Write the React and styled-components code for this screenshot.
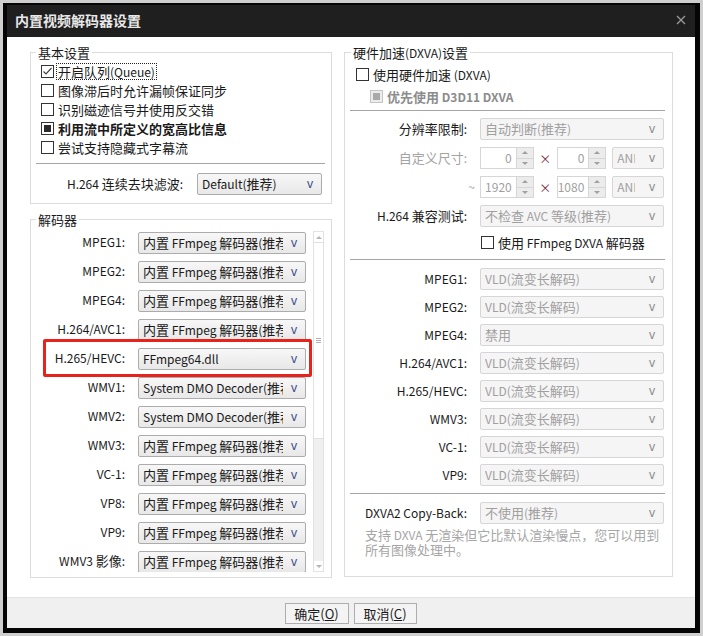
import React from "react";
import styled, { createGlobalStyle } from "styled-components";

const GlobalStyle = createGlobalStyle`
  html, body {
    margin: 0;
    padding: 0;
  }
  body {
    background: #cfcfcf;
    font-family: "Noto Sans CJK SC", "Noto Sans", sans-serif;
    font-size: 13px;
    color: #1a1a1a;
  }
`;

const Page = styled.div`
  width: 703px;
  height: 636px;
  padding: 3px;
  box-sizing: border-box;
`;

const Window = styled.div`
  width: 697px;
  height: 630px;
  box-sizing: border-box;
  border: solid #050505;
  border-width: 2px 5px 5px 4px;
  display: flex;
  flex-direction: column;
  background: #fff;
`;

const TitleBar = styled.div`
  height: 32px;
  flex-shrink: 0;
  background: #1f1f1f;
  display: flex;
  align-items: center;
  justify-content: space-between;
  padding: 0 9px 2px 8px;
  box-sizing: border-box;
`;

const Title = styled.span`
  color: #e8e8e8;
  font-weight: bold;
  font-size: 14px;
  line-height: 18px;
`;

const Content = styled.div`
  flex: 1;
  display: flex;
  align-items: flex-start;
  gap: 12px;
  padding: 7px 22px 0 23px;
`;

const Column = styled.div`
  width: ${(p) => p.$w}px;
  display: flex;
  flex-direction: column;
  gap: 7px;
`;

const Group = styled.fieldset`
  margin: 0;
  padding: 0 0 ${(p) => p.$pb || 0}px 0;
  border: 1px solid #dcdcdc;
  min-width: 0;
`;

const Legend = styled.legend`
  margin-left: ${(p) => p.$ml}px;
  padding: 0 2px;
  font-size: 13px;
  line-height: 17px;
  color: #1a1a1a;
`;

/* Latin runs are set a little smaller, as the dialog's UI font does */
const Latin = styled.span`
  font-size: 12px;
`;

const t = (text) =>
  text
    .split(/([\x20-\x7e]+)/)
    .map((part, i) => (i % 2 ? <Latin key={i}>{part}</Latin> : part));

const CheckList = styled.div`
  display: flex;
  flex-direction: column;
  gap: ${(p) => p.$gap || 0}px;
  padding: ${(p) => p.$pt || 0}px 0 0 0;
`;

const CheckRow = styled.div`
  height: 19px;
  display: flex;
  align-items: center;
  gap: 4px;
  padding-left: ${(p) => p.$indent}px;
  margin-top: ${(p) => p.$mt || 0}px;
`;

const Box = styled.span`
  width: 13px;
  height: 13px;
  box-sizing: border-box;
  border: 1px solid ${(p) => (p.$disabled ? "#c4c4c4" : "#333")};
  background: ${(p) => (p.$disabled ? "#ececec" : "#fff")};
  display: inline-flex;
  align-items: center;
  justify-content: center;
  flex-shrink: 0;
`;

const Mark = styled.span`
  width: 7px;
  height: 7px;
  background: ${(p) => (p.$disabled ? "#a9a9a9" : "#2a2a2a")};
`;

const CheckText = styled.span`
  line-height: 15px;
  white-space: nowrap;
  font-weight: ${(p) => (p.$bold ? "bold" : "normal")};
  color: ${(p) => (p.$disabled ? "#8c8c8c" : "#1a1a1a")};
  outline: ${(p) => (p.$focus ? "1px dotted #222" : "none")};
  padding: 0 1px;
  margin-left: -1px;
`;

const Separator = styled.div`
  height: 1px;
  background: #a5a5a5;
  margin: ${(p) => p.$mt}px ${(p) => p.$mr}px 0 ${(p) => p.$ml}px;
`;

const InlineRow = styled.div`
  display: flex;
  justify-content: flex-end;
  align-items: center;
  gap: 2px;
  margin-top: 9px;
  padding: 0 9px 8px 0;
`;

const Label = styled.span`
  line-height: 22px;
  text-align: right;
  white-space: nowrap;
  color: ${(p) => (p.$disabled ? "#a3a3a3" : "#1a1a1a")};
  padding-right: ${(p) => (p.$pr == null ? 11 : p.$pr)}px;
`;

const SelectBox = styled.div`
  width: ${(p) => p.$w}px;
  height: 22px;
  box-sizing: border-box;
  margin-top: ${(p) => p.$mt || 0}px;
  border: 1px solid ${(p) => (p.$disabled ? "#d6d6d6" : "#acacac")};
  border-radius: 2px;
  background: ${(p) =>
    p.$disabled ? "#f5f5f5" : "linear-gradient(#f7f7f7, #e8e8e8)"};
  display: flex;
  align-items: center;
  padding-left: 4px;
  color: ${(p) => (p.$disabled ? "#a0a0a0" : "#1a1a1a")};
`;

const SelectText = styled.span`
  flex: ${(p) => (p.$clip ? "none" : "1")};
  width: ${(p) => (p.$clip ? `${p.$clip}px` : "auto")};
  overflow: hidden;
  white-space: nowrap;
  line-height: 20px;
`;

const Arrow = styled.span`
  width: 22px;
  margin-left: auto;
  flex-shrink: 0;
  text-align: center;
  font-family: "Noto Sans", sans-serif;
  font-size: 12px;
  line-height: 20px;
  color: ${(p) => (p.$disabled ? "#8a8a8a" : "#3b4a8a")};
`;

const DecoderBody = styled.div`
  position: relative;
  display: flex;
  gap: 7px;
  padding: 3px 7px 5px 0;
`;

const Viewport = styled.div`
  width: 275px;
  height: 341px;
  overflow: hidden;
`;

const DecoderGrid = styled.div`
  display: grid;
  grid-template-columns: 105px 168px;
  grid-auto-rows: 29px;
  column-gap: 2px;
  align-items: start;
`;

const Highlight = styled.div`
  position: absolute;
  left: 12px;
  top: 111px;
  width: 269px;
  height: 38px;
  box-sizing: border-box;
  border: 3px solid #e8231c;
  border-radius: 2px;
  pointer-events: none;
`;

const Scrollbar = styled.div`
  width: 11px;
  height: 341px;
  box-sizing: border-box;
  border: 1px solid #e2e2e2;
  background: #f0f0f0;
  display: flex;
  flex-direction: column;
`;

const ScrollArrow = styled.div`
  height: 10px;
  flex-shrink: 0;
  background: #fff;
  display: flex;
  align-items: center;
  justify-content: center;
  margin-top: ${(p) => (p.$down ? "auto" : "0")};
  &::after {
    content: "";
    border-left: 3px solid transparent;
    border-right: 3px solid transparent;
    ${(p) =>
      p.$down
        ? "border-top: 3px solid #b5b5b5;"
        : "border-bottom: 3px solid #b5b5b5;"}
  }
`;

const Thumb = styled.div`
  height: 195px;
  flex-shrink: 0;
  background: #fff;
  border-top: 1px solid #e0e0e0;
  border-bottom: 1px solid #e0e0e0;
  display: flex;
  flex-direction: column;
  align-items: center;
  justify-content: center;
  gap: 1px;
`;

const Grip = styled.span`
  width: 5px;
  height: 1px;
  background: #b0b0b0;
`;

const FormGrid = styled.div`
  display: grid;
  grid-template-columns: 133px 184px;
  column-gap: 2px;
  row-gap: ${(p) => p.$gap}px;
  margin-top: ${(p) => p.$mt}px;
`;

const SpinRow = styled.div`
  display: flex;
  align-items: center;
`;

const Spin = styled.div`
  width: ${(p) => p.$w}px;
  height: 22px;
  box-sizing: border-box;
  border: 1px solid #d6d6d6;
  background: #fff;
  display: flex;
`;

const SpinValue = styled.span`
  flex: 1;
  text-align: right;
  padding-right: 4px;
  line-height: 20px;
  font-size: 12px;
  color: #a0a0a0;
`;

const SpinButtons = styled.div`
  width: 16px;
  display: flex;
  flex-direction: column;
  border-left: 1px solid #d6d6d6;
`;

const SpinButton = styled.div`
  flex: 1;
  background: #ececec;
  display: flex;
  align-items: center;
  justify-content: center;
  & + & {
    border-top: 1px solid #d6d6d6;
  }
  &::after {
    content: "";
    border-left: 3px solid transparent;
    border-right: 3px solid transparent;
    ${(p) =>
      p.$down
        ? "border-top: 3px solid #a0a0a0;"
        : "border-bottom: 3px solid #a0a0a0;"}
  }
`;

const Times = styled.span`
  width: 23px;
  text-align: center;
  color: #7d2a3f;
  font-size: 12px;
`;

const Spacer = styled.span`
  width: ${(p) => p.$w}px;
`;

const Note = styled.div`
  margin-top: 3px;
  padding-left: 20px;
  color: #a6a6a6;
  line-height: 15px;
  white-space: nowrap;
`;

const Footer = styled.div`
  height: 31px;
  box-sizing: border-box;
  flex-shrink: 0;
  border-top: 1px solid #e3e3e3;
  background: #f0f0f0;
  display: flex;
  justify-content: center;
  align-items: flex-start;
  gap: 5px;
  padding: 5px 1px 0 0;
`;

const Button = styled.button`
  width: ${(p) => p.$w}px;
  height: 21px;
  padding: 0;
  border: 1px solid #adadad;
  background: #f4f4f4;
  font-family: inherit;
  font-size: 13px;
  line-height: 17px;
  color: #1a1a1a;
`;

const Check = ({ state, disabled, bold, focus, indent, mt, children }) => (
  <CheckRow $indent={indent} $mt={mt}>
    <Box $disabled={disabled}>
      {state === "checked" && (
        <svg width="11" height="11" viewBox="0 0 11 11">
          <polyline
            points="1.5,5.5 4,8 9.5,2"
            fill="none"
            stroke="#444"
            strokeWidth="1.2"
          />
        </svg>
      )}
      {state === "mixed" && <Mark $disabled={disabled} />}
    </Box>
    <CheckText $bold={bold} $disabled={disabled} $focus={focus}>
      {t(children)}
    </CheckText>
  </CheckRow>
);

const Select = ({ w, value, disabled, clip, mt }) => (
  <SelectBox $w={w} $disabled={disabled} $mt={mt}>
    <SelectText $clip={clip}>{t(value)}</SelectText>
    <Arrow $disabled={disabled}>v</Arrow>
  </SelectBox>
);

const SpinBox = ({ w, value }) => (
  <Spin $w={w}>
    <SpinValue>{value}</SpinValue>
    <SpinButtons>
      <SpinButton />
      <SpinButton $down />
    </SpinButtons>
  </Spin>
);

const FF = "内置 FFmpeg 解码器(推荐)";
const DMO = "System DMO Decoder(推荐)";
const VLD = "VLD(流变长解码)";

const decoders = [
  ["MPEG1", FF],
  ["MPEG2", FF],
  ["MPEG4", FF],
  ["H.264/AVC1", FF],
  ["H.265/HEVC", "FFmpeg64.dll"],
  ["WMV1", DMO],
  ["WMV2", DMO],
  ["WMV3", FF],
  ["VC-1", FF],
  ["VP8", FF],
  ["VP9", FF],
  ["WMV3 影像", FF],
];

const dxvaModes = [
  ["MPEG1", VLD],
  ["MPEG2", VLD],
  ["MPEG4", "禁用"],
  ["H.264/AVC1", VLD],
  ["H.265/HEVC", VLD],
  ["WMV3", VLD],
  ["VC-1", VLD],
  ["VP9", VLD],
];

const CloseIcon = () => (
  <svg width="10" height="10" viewBox="0 0 10 10">
    <path d="M1 1 L9 9 M9 1 L1 9" stroke="#9a9a9a" strokeWidth="1.3" />
  </svg>
);

const SizeRow = ({ a, b }) => (
  <SpinRow>
    <SpinBox w={54} value={a} />
    <Times>×</Times>
    <SpinBox w={50} value={b} />
    <Spacer $w={6} />
    <Select w={52} value="AND" disabled clip={18} />
  </SpinRow>
);

export default function App() {
  return (
    <>
      <GlobalStyle />
      <Page>
        <Window>
          <TitleBar>
            <Title>内置视频解码器设置</Title>
            <CloseIcon />
          </TitleBar>
          <Content>
            <Column $w={302}>
              <Group>
                <Legend $ml={5}>基本设置</Legend>
                <CheckList $pt={1}>
                  <Check indent={10} state="checked" focus>
                    开启队列(Queue)
                  </Check>
                  <Check indent={10}>图像滞后时允许漏帧保证同步</Check>
                  <Check indent={10}>识别磁迹信号并使用反交错</Check>
                  <Check indent={10} state="mixed" bold>
                    利用流中所定义的宽高比信息
                  </Check>
                  <Check indent={10}>尝试支持隐藏式字幕流</Check>
                </CheckList>
                <Separator $mt={6} $ml={5} $mr={6} />
                <InlineRow>
                  <Label $pr={12}>{t("H.264 连续去块滤波:")}</Label>
                  <Select w={125} value="Default(推荐)" />
                </InlineRow>
              </Group>
              <Group>
                <Legend $ml={5}>解码器</Legend>
                <DecoderBody>
                  <Viewport>
                    <DecoderGrid>
                      {decoders.map(([name, value]) => (
                        <React.Fragment key={name}>
                          <Label>{t(`${name}:`)}</Label>
                          <Select w={168} value={value} mt={1} />
                        </React.Fragment>
                      ))}
                    </DecoderGrid>
                  </Viewport>
                  <Scrollbar>
                    <ScrollArrow />
                    <Thumb>
                      <Grip />
                      <Grip />
                      <Grip />
                    </Thumb>
                    <ScrollArrow $down />
                  </Scrollbar>
                  <Highlight />
                </DecoderBody>
              </Group>
            </Column>
            <Column $w={329}>
              <Group $pb={19}>
                <Legend $ml={6}>{t("硬件加速(DXVA)设置")}</Legend>
                <CheckList $pt={4} $gap={3}>
                  <Check indent={11}>使用硬件加速 (DXVA)</Check>
                  <Check indent={25} state="mixed" disabled bold>
                    优先使用 D3D11 DXVA
                  </Check>
                </CheckList>
                <Separator $mt={4} $ml={5} $mr={7} />
                <FormGrid $gap={7} $mt={7}>
                  <Label>{t("分辨率限制:")}</Label>
                  <Select w={184} value="自动判断(推荐)" disabled />
                  <Label $disabled>{t("自定义尺寸:")}</Label>
                  <SizeRow a="0" b="0" />
                  <Label $disabled $pr={3}>
                    {t("~")}
                  </Label>
                  <SizeRow a="1920" b="1080" />
                  <Label>{t("H.264 兼容测试:")}</Label>
                  <Select w={184} value="不检查 AVC 等级(推荐)" disabled />
                </FormGrid>
                <Check indent={136} mt={6}>
                  使用 FFmpeg DXVA 解码器
                </Check>
                <Separator $mt={7} $ml={5} $mr={7} />
                <FormGrid $gap={6} $mt={8}>
                  {dxvaModes.map(([name, value]) => (
                    <React.Fragment key={name}>
                      <Label>{t(`${name}:`)}</Label>
                      <Select w={184} value={value} disabled />
                    </React.Fragment>
                  ))}
                </FormGrid>
                <Separator $mt={7} $ml={5} $mr={7} />
                <FormGrid $gap={0} $mt={8}>
                  <Label>{t("DXVA2 Copy-Back:")}</Label>
                  <Select w={184} value="不使用(推荐)" disabled />
                </FormGrid>
                <Note>
                  <div>{t("支持 DXVA 无渲染但它比默认渲染慢点，您可以用到")}</div>
                  <div>所有图像处理中。</div>
                </Note>
              </Group>
            </Column>
          </Content>
          <Footer>
            <Button $w={64}>
              确定(<u>O</u>)
            </Button>
            <Button $w={63}>
              取消(<u>C</u>)
            </Button>
          </Footer>
        </Window>
      </Page>
    </>
  );
}
